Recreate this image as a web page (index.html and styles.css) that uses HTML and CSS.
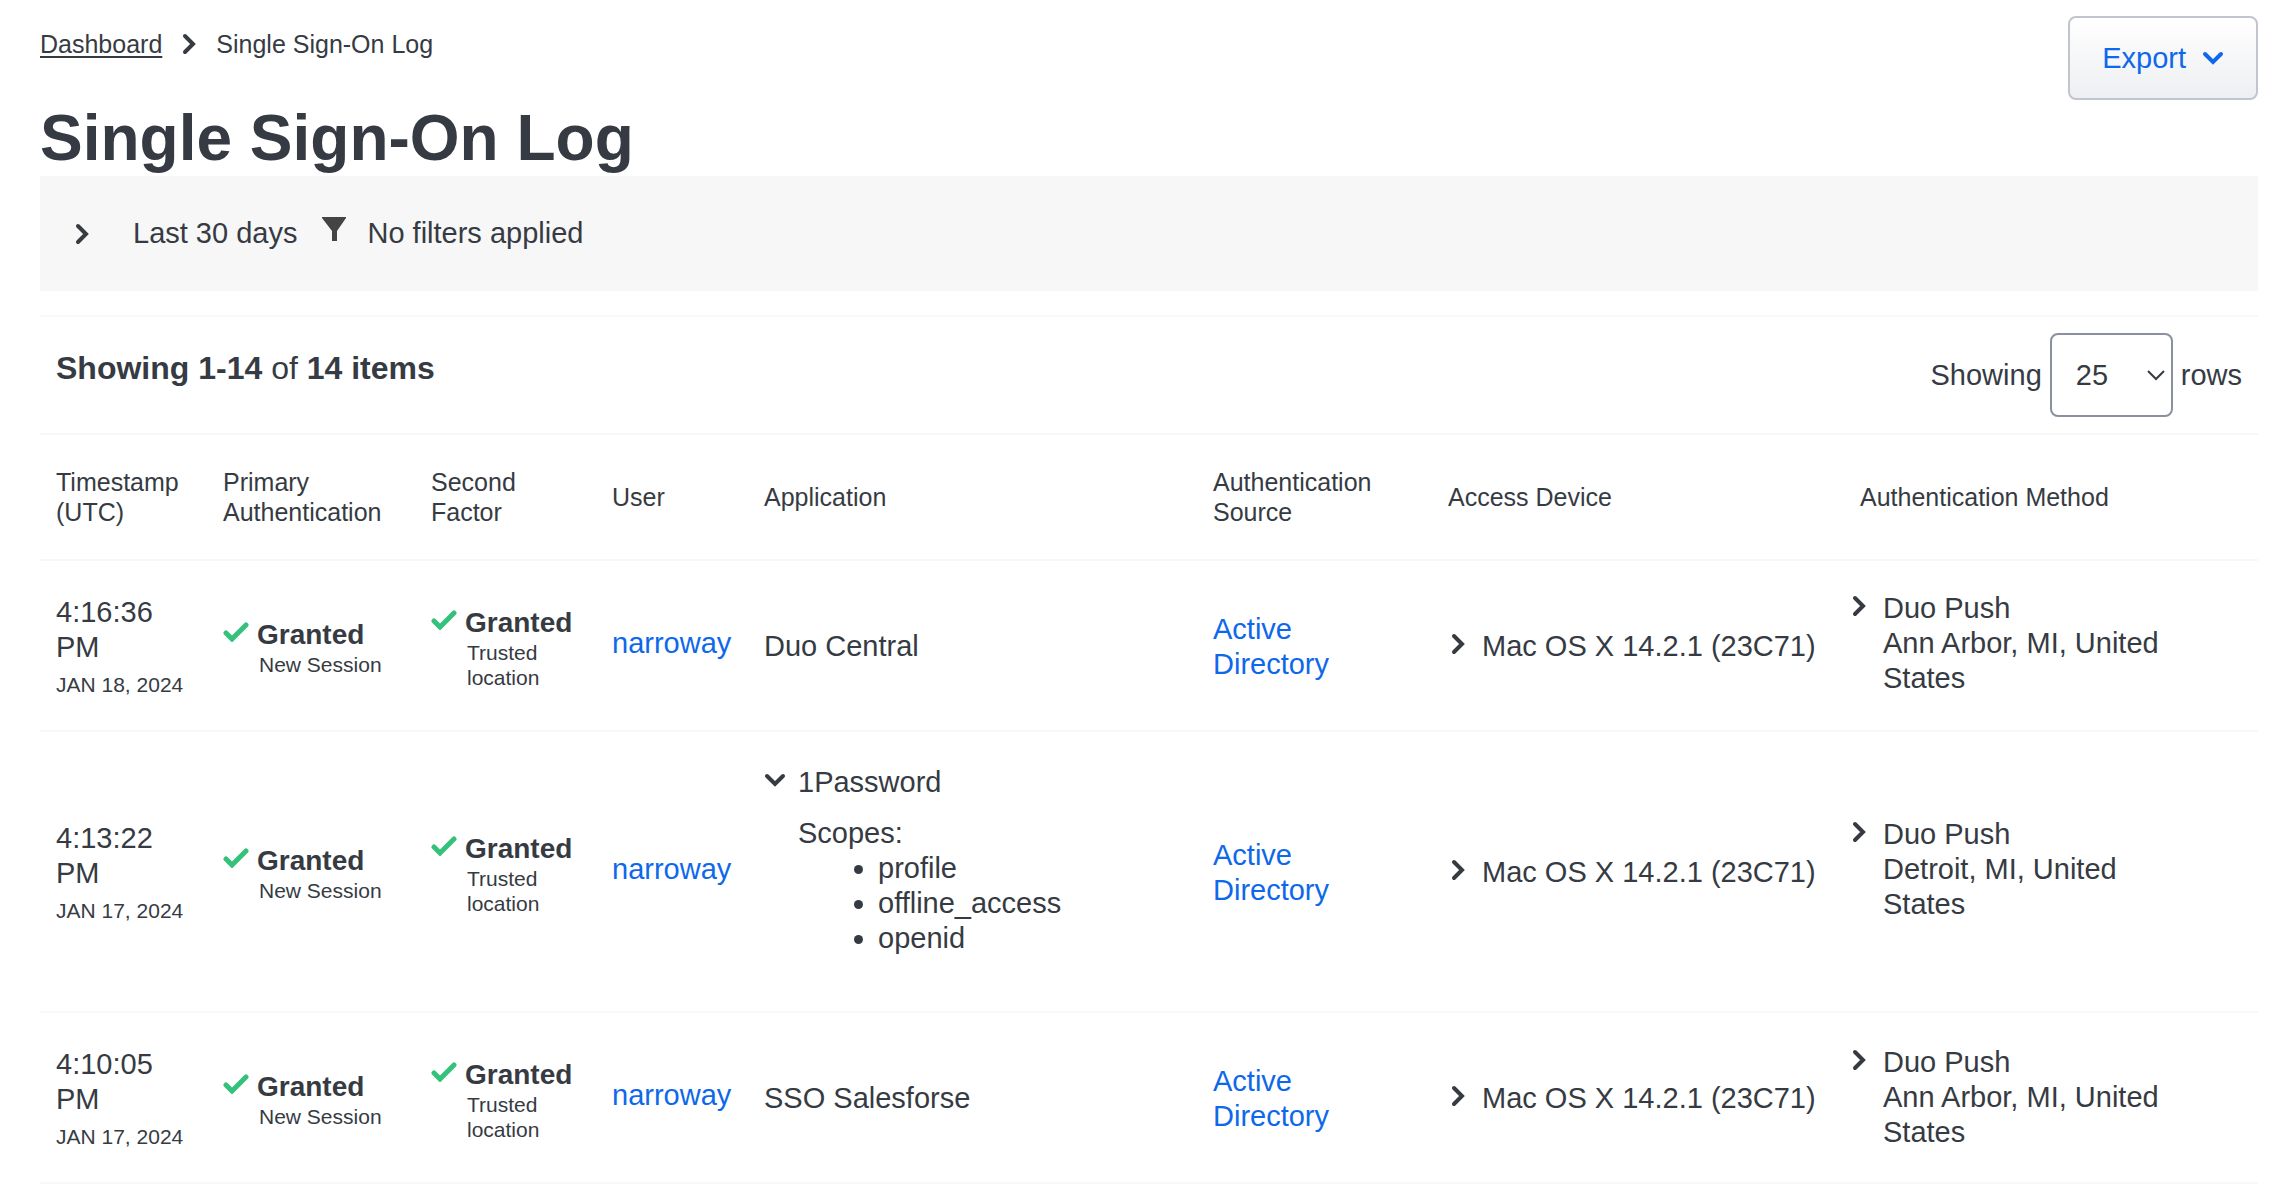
FILE: index.html
```html
<!DOCTYPE html>
<html lang="en">
<head>
<meta charset="utf-8">
<meta name="viewport" content="width=device-width, initial-scale=1">
<title>Single Sign-On Log</title>
<link rel="stylesheet" href="styles.css">
</head>
<body>
<svg class="sprite" aria-hidden="true">
  <symbol id="chevron-right" viewBox="0 0 14 22"><path d="M3 3l8 8-8 8" fill="none" stroke="currentColor" stroke-width="4" stroke-linecap="round"/></symbol>
  <symbol id="chevron-down" viewBox="0 0 22 14"><path d="M3 3l8 8 8-8" fill="none" stroke="currentColor" stroke-width="4" stroke-linecap="round"/></symbol>
  <symbol id="check" viewBox="0 0 26 20"><path d="M3 11l6 6L23 3" fill="none" stroke="currentColor" stroke-width="5" stroke-linecap="round"/></symbol>
</svg>
<main class="page">
  <header class="page-header">
    <div class="heading">
      <nav class="breadcrumb" aria-label="Breadcrumb">
        <a href="#dashboard">Dashboard</a>
        <svg class="icon-right"><use href="#chevron-right"/></svg>
        <span>Single Sign-On Log</span>
      </nav>
      <h1 class="title">Single Sign-On Log</h1>
    </div>
    <button class="export" type="button">Export <svg class="icon-down"><use href="#chevron-down"/></svg></button>
  </header>

  <section class="filters" aria-label="Filters">
    <button class="toggle" type="button" aria-label="Show filters"><svg class="icon-right"><use href="#chevron-right"/></svg></button>
    <span class="range">Last 30 days</span>
    <svg class="funnel" viewBox="0 0 24 24"><path d="M0 0h24v1l-9 13v10h-5V14L0 1z" fill="#444"/></svg>
    <span>No filters applied</span>
  </section>

  <section class="log">
    <div class="toolbar">
      <p class="count"><b>Showing 1-14</b> of <b>14 items</b></p>
      <div class="rows">
        <label for="rows">Showing</label>
        <span class="select-wrap">
          <select id="rows" class="select"><option>25</option><option>50</option><option>100</option></select>
          <svg class="select-arrow" viewBox="0 0 18 12"><path d="M1 1l8 8 8-8" fill="none" stroke="currentColor" stroke-width="2"/></svg>
        </span>
        <span>rows</span>
      </div>
    </div>

    <table class="table">
      <colgroup>
        <col class="col-time"><col class="col-primary"><col class="col-second"><col class="col-user">
        <col><col class="col-source"><col class="col-device"><col class="col-method">
      </colgroup>
      <thead>
        <tr>
          <th>Timestamp (UTC)</th><th>Primary Authentication</th><th>Second Factor</th><th>User</th>
          <th>Application</th><th>Authentication Source</th><th>Access Device</th><th>Authentication Method</th>
        </tr>
      </thead>
      <tbody>
        <tr>
          <td>4:16:36 PM<small class="date">JAN 18, 2024</small></td>
          <td><div class="result"><svg class="icon-check"><use href="#check"/></svg><div><b>Granted</b><small>New Session</small></div></div></td>
          <td><div class="result"><svg class="icon-check"><use href="#check"/></svg><div><b>Granted</b><small>Trusted location</small></div></div></td>
          <td><a class="user" href="#narroway">narroway</a></td>
          <td class="single">Duo Central</td>
          <td class="source"><a href="#active-directory">Active Directory</a></td>
          <td class="single"><div class="expand device"><svg class="icon-right"><use href="#chevron-right"/></svg><span>Mac OS X 14.2.1 (23C71)</span></div></td>
          <td class="method"><div class="expand"><svg class="icon-right"><use href="#chevron-right"/></svg><div>Duo Push<br>Ann Arbor, MI, United States</div></div></td>
        </tr>
        <tr>
          <td>4:13:22 PM<small class="date">JAN 17, 2024</small></td>
          <td><div class="result"><svg class="icon-check"><use href="#check"/></svg><div><b>Granted</b><small>New Session</small></div></div></td>
          <td><div class="result"><svg class="icon-check"><use href="#check"/></svg><div><b>Granted</b><small>Trusted location</small></div></div></td>
          <td><a class="user" href="#narroway">narroway</a></td>
          <td>
            <div class="expand app">
              <svg class="icon-down"><use href="#chevron-down"/></svg>
              <div>1Password
                <div class="scopes">Scopes:
                  <ul><li>profile</li><li>offline_access</li><li>openid</li></ul>
                </div>
              </div>
            </div>
          </td>
          <td class="source"><a href="#active-directory">Active Directory</a></td>
          <td class="single"><div class="expand device"><svg class="icon-right"><use href="#chevron-right"/></svg><span>Mac OS X 14.2.1 (23C71)</span></div></td>
          <td class="method"><div class="expand"><svg class="icon-right"><use href="#chevron-right"/></svg><div>Duo Push<br>Detroit, MI, United States</div></div></td>
        </tr>
        <tr>
          <td>4:10:05 PM<small class="date">JAN 17, 2024</small></td>
          <td><div class="result"><svg class="icon-check"><use href="#check"/></svg><div><b>Granted</b><small>New Session</small></div></div></td>
          <td><div class="result"><svg class="icon-check"><use href="#check"/></svg><div><b>Granted</b><small>Trusted location</small></div></div></td>
          <td><a class="user" href="#narroway">narroway</a></td>
          <td class="single">SSO Salesforse</td>
          <td class="source"><a href="#active-directory">Active Directory</a></td>
          <td class="single"><div class="expand device"><svg class="icon-right"><use href="#chevron-right"/></svg><span>Mac OS X 14.2.1 (23C71)</span></div></td>
          <td class="method"><div class="expand"><svg class="icon-right"><use href="#chevron-right"/></svg><div>Duo Push<br>Ann Arbor, MI, United States</div></div></td>
        </tr>
      </tbody>
    </table>
  </section>
</main>
</body>
</html>
```
FILE: styles.css
```css
* { box-sizing: border-box; }

body {
  margin: 0;
  background: #fff;
  color: #363b43;
  font: 29px/35px "Liberation Sans", Arial, sans-serif;
}

a { color: #0d68eb; text-decoration: none; }
svg { display: block; flex: none; }
small { display: block; font-size: 21px; line-height: 25px; }

.sprite { position: absolute; width: 0; height: 0; }
.icon-right { width: 14px; height: 22px; }
.icon-down { width: 22px; height: 14px; }
.icon-check { width: 26px; height: 20px; margin-top: 5px; color: #34c27b; }

.page { padding: 16px 18px 8px 40px; }

/* Header */
.page-header { display: flex; justify-content: space-between; align-items: flex-start; }
.breadcrumb {
  display: flex;
  align-items: center;
  gap: 20px;
  padding-top: 13px;
  font-size: 25px;
  line-height: 30px;
}
.breadcrumb a { color: inherit; text-decoration: underline; text-underline-offset: 3px; text-decoration-thickness: 2px; }
.title { margin: 41px 0 0; font-size: 64px; line-height: 76px; }

.export {
  display: flex;
  align-items: center;
  gap: 16px;
  height: 84px;
  padding: 0 32px;
  border: 2px solid #c1c6ce;
  border-radius: 8px;
  background: linear-gradient(#fff, #eeeff2);
  color: #0d68eb;
  font: inherit;
}

/* Filter bar */
.filters { display: flex; align-items: center; height: 115px; padding: 0 35px; background: #f7f7f7; }
.toggle { padding: 0; border: 0; background: none; color: inherit; }
.range { margin-left: 44px; }
.funnel { width: 24px; height: 24px; margin: 0 21px 10px 25px; }

/* Row count and page size */
.log { margin-top: 24px; border-top: 2px solid #f7f7f7; }
.toolbar { display: flex; justify-content: space-between; padding: 16px; }
.count { margin: 18px 0 0; font-size: 32px; }
.rows { display: flex; align-items: center; gap: 8px; }
.select-wrap { position: relative; }
.select {
  display: block;
  appearance: none;
  width: 123px;
  height: 84px;
  padding: 0 24px;
  border: 2px solid #8b90a0;
  border-radius: 8px;
  background: #fff;
  color: inherit;
  font: inherit;
}
.select-arrow { position: absolute; right: 8px; top: 37px; width: 18px; height: 12px; pointer-events: none; }

/* Log table */
.table { width: 100%; table-layout: fixed; border-collapse: separate; border-spacing: 0; }
.col-time { width: 167px; }
.col-primary { width: 208px; }
.col-second { width: 181px; }
.col-user { width: 152px; }
.col-source { width: 235px; }
.col-device { width: 412px; }
.col-method { width: 414px; }

.table th {
  padding: 32px 16px;
  border-top: 2px solid #f7f7f7;
  font-size: 25px;
  font-weight: 400;
  line-height: 30px;
  text-align: left;
  vertical-align: middle;
}
.table td { padding: 30px 16px; border-top: 2px solid #f7f7f7; vertical-align: middle; }
.table tbody tr:last-child td { border-bottom: 2px solid #f7f7f7; }

.date { margin-top: 7px; }
.result { display: flex; gap: 8px; padding-top: 3px; }
.result b { display: block; font-size: 28px; }
.result small { padding-left: 2px; }
.user { display: block; padding-bottom: 5px; }
.table .single { padding-top: 32px; }
.table .source { padding: 32px 40px 30px 16px; }
.expand { display: flex; gap: 17px; }
.expand .icon-right { margin-top: 4px; }
.device { padding-left: 3px; }
.table .method { padding: 30px 60px 34px 8px; }
.table tbody tr:last-child .method { padding-top: 32px; padding-bottom: 32px; }
.app { gap: 12px; padding: 3px 0 25px; }
.app .icon-down { margin-top: 8px; }
.scopes { margin-top: 16px; }
.scopes ul { margin: 0; padding-left: 80px; }
```
